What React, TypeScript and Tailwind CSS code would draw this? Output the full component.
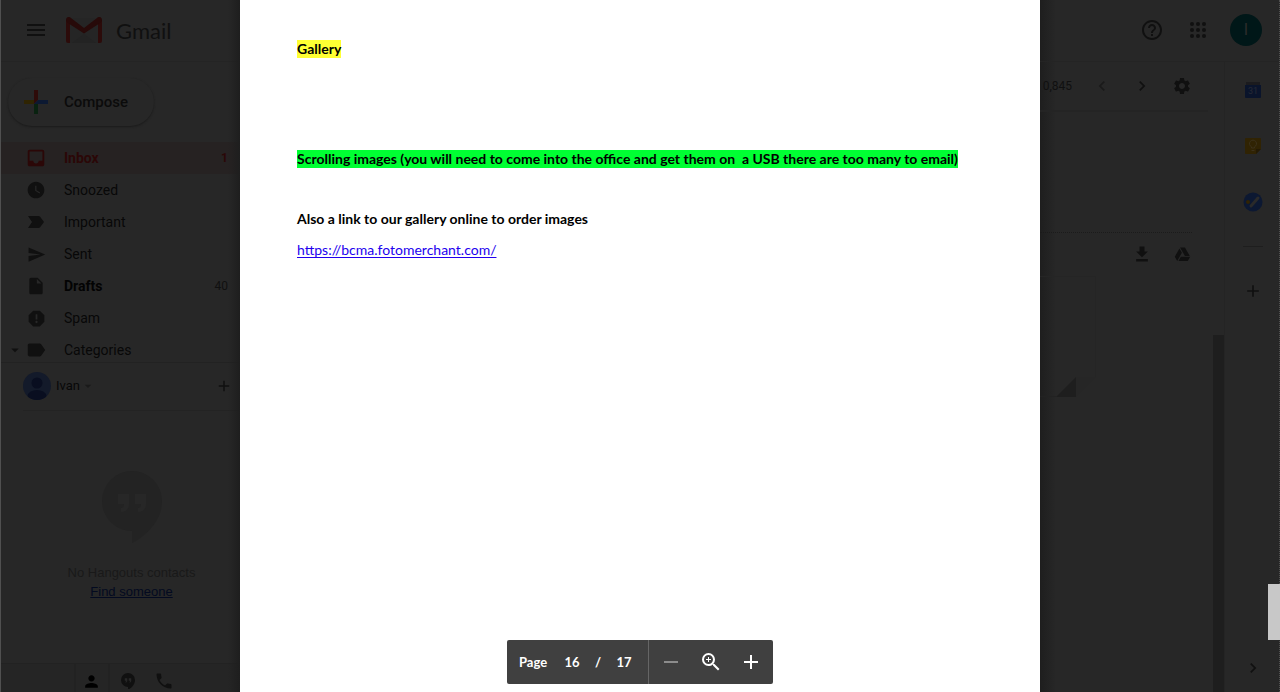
import type { ReactNode } from 'react';
import {
  MdAdd,
  MdArrowDropDown,
  MdChevronLeft,
  MdChevronRight,
  MdHelpOutline,
  MdInbox,
  MdInsertDriveFile,
  MdLabel,
  MdPerson,
  MdPhone,
  MdReport,
  MdSend,
  MdSettings,
  MdWatchLater,
  MdZoomIn,
} from 'react-icons/md';

type Folder = { name: string; icon: ReactNode; count?: string; tone: string };

function ImportantMark() {
  return (
    <svg width="16" height="12" viewBox="0 0 16 12" fill="currentColor" aria-hidden="true">
      <path d="M0 0h10.500c.7 0 1.200.3 1.600.8L16 6l-3.900 5.200c-.4.5-.9.8-1.600.8H0l4-6z" />
    </svg>
  );
}

const folders: Folder[] = [
  { name: 'Inbox', icon: <MdInbox size={22} />, count: '1', tone: 'bg-[#262222] font-bold text-[#2b0707]' },
  { name: 'Snoozed', icon: <MdWatchLater size={20} />, tone: 'text-[#080808]' },
  { name: 'Important', icon: <ImportantMark />, tone: 'text-[#080808]' },
  { name: 'Sent', icon: <MdSend size={19} />, tone: 'text-[#080808]' },
  { name: 'Drafts', icon: <MdInsertDriveFile size={20} />, count: '40', tone: 'font-bold text-[#030303]' },
  { name: 'Spam', icon: <MdReport size={21} />, tone: 'text-[#080808]' },
  { name: 'Categories', icon: <MdLabel size={22} />, tone: 'text-[#080808]' },
];

function GmailLogo() {
  return (
    <svg width="36" height="26" viewBox="0 0 36 26" aria-hidden="true">
      <path d="M2 1h32v25H2z" fill="#252525" />
      <path d="M18 17 30 26H6z" fill="#232323" />
      <path d="M0 3v21a2 2 0 0 0 2 2h2V3z" fill="#2c0b0a" />
      <path d="M36 3v21a2 2 0 0 1-2 2h-2V3z" fill="#2c0b0a" />
      <path d="M0 3C0 0 3-1 5 1l13 10L31 1c2-2 5-1 5 2 0 1-.6 2-1.500 2.700L18 16.500 1.500 5.700C.6 5 0 4 0 3z" fill="#270a09" />
    </svg>
  );
}

function ComposePlus() {
  return (
    <svg width="24" height="24" viewBox="0 0 24 24" aria-hidden="true">
      <path d="M10 0h4v10l-4 4z" fill="#2e0b09" />
      <path d="M0 10h10v4H0z" fill="#2f2402" />
      <path d="M14 10h10v4H10z" fill="#0c1932" />
      <path d="M10 14h4v10h-4z" fill="#092210" />
    </svg>
  );
}

function HangoutsMark({ size, fill, quote }: { size: number; fill: string; quote: string }) {
  return (
    <svg width={size} height={size * 1.2} viewBox="0 0 60 72" aria-hidden="true">
      <path d="M30 0a30 30 0 1 0 0 60v12c14-7 30-22 30-42A30 30 0 0 0 30 0z" fill={fill} />
      <path d="M16 23h11v10c0 5-3 8-8 8v-4c2 0 3-1 3-4h-6zM33 23h11v10c0 5-3 8-8 8v-4c2 0 3-1 3-4h-6z" fill={quote} />
    </svg>
  );
}

function FolderRow({ folder }: { folder: Folder }) {
  return (
    <a href="#" className={`flex h-8 shrink-0 items-center pr-3 text-sm ${folder.tone}`}>
      <span className="flex w-[23px] justify-end text-[#101010]">
        {folder.name === 'Categories' && <MdArrowDropDown size={18} />}
      </span>
      <span className={`flex w-6 justify-center ${folder.name === 'Inbox' ? '' : 'text-[#101010]'}`}>{folder.icon}</span>
      <span className="ml-4 flex-1">{folder.name}</span>
      {folder.count && (
        <span className={folder.name === 'Inbox' ? 'text-xs' : 'text-xs font-normal text-[#101010]'}>{folder.count}</span>
      )}
    </a>
  );
}

function Sidebar() {
  return (
    <aside className="relative flex w-60 shrink-0 flex-col overflow-hidden border-l border-[#505050] bg-[#272727]">
      <header className="flex h-[62px] shrink-0 items-center border-b border-[#242424] pb-px pl-[26px]">
        <button aria-label="Main menu" className="flex w-[18px] flex-col gap-[3px]">
          <span className="h-[2px] w-full bg-[#101010]" />
          <span className="h-[2px] w-full bg-[#101010]" />
          <span className="h-[2px] w-full bg-[#101010]" />
        </button>
        <span className="ml-[21px] flex items-center gap-[14px]">
          <GmailLogo />
          <span className="font-[Lato,sans-serif] text-[22px] text-[#101010]">Gmail</span>
        </span>
      </header>
      <div className="shrink-0 pt-4 pl-[7px]">
        <button className="flex h-12 w-[146px] items-center gap-4 rounded-full bg-[#272727] pl-4 text-[#0b0b0b] shadow-[0_1px_2px_#1b1b1b]">
          <ComposePlus />
          <span className="text-[15px] font-medium">Compose</span>
        </button>
      </div>
      <nav className="mt-4 flex h-[221px] shrink-0 flex-col overflow-hidden border-b border-[#222222]">
        {folders.map((f) => (
          <FolderRow key={f.name} folder={f} />
        ))}
      </nav>
      <section className="flex min-h-0 flex-1 flex-col">
        <div className="ml-[22px] flex h-12 shrink-0 items-center border-b border-[#232323] pr-[7px] pb-[2px] text-[#101010]">
          <svg width="28" height="28" viewBox="0 0 28 28" aria-hidden="true">
            <clipPath id="face"><circle cx="14" cy="14" r="14" /></clipPath>
            <g clipPath="url(#face)">
              <path d="M0 0h28v28H0z" fill="#131a2a" />
              <circle cx="14" cy="11" r="5.500" fill="#090e20" />
              <ellipse cx="14" cy="24" rx="9.500" ry="6" fill="#090e20" />
            </g>
          </svg>
          <button className="ml-[5px] flex items-center text-[13px] text-[#080808]">
            Ivan
            <MdArrowDropDown size={16} className="text-[#1a1a1a]" />
          </button>
          <button aria-label="New conversation" className="ml-auto">
            <MdAdd size={18} />
          </button>
        </div>
        <div className="flex flex-1 flex-col items-center pt-[60px] pl-[22px] font-['Liberation_Sans',sans-serif] text-[13px] leading-[19px]">
          <HangoutsMark size={60} fill="#232323" quote="#272727" />
          <p className="mt-5 text-[#191919]">No Hangouts contacts</p>
          <a href="#" className="text-[#030a20] underline">Find someone</a>
        </div>
        <div className="flex h-[29px] shrink-0 justify-center border-t border-[#222222] bg-[#252525] pl-[14px] text-[#101010]">
          <button aria-label="Contacts" className="flex w-9 items-center justify-center border-x-2 border-[#222222] pt-[6px] text-black">
            <MdPerson size={19} />
          </button>
          <button aria-label="Conversations" className="flex w-9 items-center justify-center pt-[6px]">
            <HangoutsMark size={14} fill="#101010" quote="#272727" />
          </button>
          <button aria-label="Phone" className="flex w-9 items-center justify-center pt-[6px]">
            <MdPhone size={20} />
          </button>
        </div>
      </section>
      <div className="absolute inset-y-0 right-0 w-3 bg-linear-to-l from-[#1e1e1e] to-transparent" />
    </aside>
  );
}

function PageControls() {
  return (
    <div className="absolute bottom-2 left-1/2 flex h-11 w-[266px] -translate-x-1/2 items-center rounded-xs bg-[#404040] font-[Lato,sans-serif] text-[13px] font-bold text-white">
      <label htmlFor="page" className="ml-3 w-[37px]">Page</label>
      <input id="page" defaultValue="16" className="w-8 bg-transparent text-center" />
      <span className="w-5 text-center">/</span>
      <span className="w-8 text-center">17</span>
      <div className="ml-2 flex h-full flex-1 items-center justify-center border-l border-[#666666]">
        <button aria-label="Zoom out" className="flex h-10 w-10 items-center justify-center">
          <span className="h-[2px] w-[14px] bg-[#8c8c8c]" />
        </button>
        <button aria-label="Reset zoom" className="flex h-10 w-10 items-center justify-center">
          <MdZoomIn size={24} />
        </button>
        <button aria-label="Zoom in" className="flex h-10 w-10 items-center justify-center">
          <MdAdd size={24} />
        </button>
      </div>
    </div>
  );
}

function DocumentPage() {
  return (
    <main className="relative min-w-0 flex-1 bg-white px-[57px] font-[Lato,sans-serif] text-sm leading-[18px] text-black">
      <h1 className="pt-10 font-bold">
        <mark className="inline-block bg-[#ffff33] text-black">Gallery</mark>
      </h1>
      <p className="mt-[92px] font-bold whitespace-pre">
        <mark className="inline-block bg-[#00ff33] text-black">
          {'Scrolling images (you will need to come into the office and get them on  a USB there are too many to email)'}
        </mark>
      </p>
      <p className="mt-[42px] font-bold">Also a link to our gallery online to order images</p>
      <p className="mt-[13px]">
        <a href="https://bcma.fotomerchant.com/" className="text-[#2200ee] underline underline-offset-2">
          https://bcma.fotomerchant.com/
        </a>
      </p>
      <PageControls />
    </main>
  );
}

function AppsGrid() {
  return (
    <svg width="18" height="18" viewBox="0 0 18 18" fill="#101010" aria-hidden="true">
      {[3, 9, 15].map((y) => [3, 9, 15].map((x) => <circle key={`${x}-${y}`} cx={x} cy={y} r="2" />))}
    </svg>
  );
}

function MailPane() {
  return (
    <section className="flex min-w-0 flex-1 flex-col">
      <div className="mr-4 flex h-[50px] shrink-0 items-center justify-end border-b-2 border-[#242424] pr-[6px] text-xs text-[#101010]">
        <span className="mr-[10px]">0,845</span>
        <button aria-label="Newer" className="flex w-10 shrink-0 justify-center text-[#1a1a1a]"><MdChevronLeft size={20} /></button>
        <button aria-label="Older" className="flex w-10 shrink-0 justify-center"><MdChevronRight size={20} /></button>
        <button aria-label="Settings" className="flex w-10 shrink-0 justify-center"><MdSettings size={20} /></button>
      </div>
      <div className="flex min-h-0 flex-1 justify-between">
        <div className="w-[152px] pt-[120px]">
          <div className="flex h-11 items-center justify-end gap-5 border-t border-dotted border-[#1b1b1b] pb-px text-[#101010]">
            <button aria-label="Download" className="flex w-5 justify-center">
              <svg width="20" height="20" viewBox="0 0 24 24" fill="currentColor"><path d="M19 9h-4V3H9v6H5l7 7 7-7zM5 18v3h14v-3H5z" /></svg>
            </button>
            <button aria-label="Add to Drive" className="flex w-5 justify-center">
              <svg width="17" height="17" viewBox="0 0 24 24" fill="currentColor">
                <path d="M7.710 3.500 1.150 15 4.580 21 11.130 9.500zM9.730 15 6.300 21h13.120l3.430-6zM22.280 14 15.420 2H8.580l6.850 12z" />
              </svg>
            </button>
          </div>
          <div className="h-[101px] w-14 border-t border-r border-[#252525]" />
          <svg width="56" height="20" viewBox="0 0 56 20" aria-hidden="true">
            <path d="M16 20 36 0v20z" fill="#1e1e1e" />
            <path d="M36 20 56 0H36z" fill="#262626" />
            <path d="M0 19.500h16" stroke="#222222" />
          </svg>
        </div>
        <div className="mt-[223px] w-[11px] bg-[#1e1e1e]" />
      </div>
    </section>
  );
}

function AddOnRail() {
  return (
    <aside className="flex w-[55px] shrink-0 flex-col items-center border-l border-[#242424] pl-px">
      <button aria-label="Calendar" className="mt-5">
        <svg width="16" height="16" viewBox="0 0 16 16" aria-hidden="true">
          <path d="M1 0h14v5H1z" fill="#1b1b1e" />
          <path d="M0 3h16v12a1 1 0 0 1-1 1H1a1 1 0 0 1-1-1z" fill="#0a142b" />
          <text x="8" y="12" fontSize="9" fontFamily="Roboto, sans-serif" textAnchor="middle" fill="#262a35">31</text>
        </svg>
      </button>
      <button aria-label="Keep" className="mt-10">
        <svg width="16" height="16" viewBox="0 0 16 16" fill="none" aria-hidden="true">
          <path d="M1 0h14a1 1 0 0 1 1 1v10l-5 5H1a1 1 0 0 1-1-1V1a1 1 0 0 1 1-1z" fill="#302303" />
          <path d="M16 11v0l-5 5v-5z" fill="#241a04" />
          <path d="M6.500 10V8.800a3.500 3.500 0 1 1 3 0V10zM6.500 12.500h3" stroke="#3b311b" />
        </svg>
      </button>
      <button aria-label="Tasks" className="mt-[38px]">
        <svg width="20" height="20" viewBox="0 0 20 20" aria-hidden="true">
          <circle cx="10" cy="10" r="9.500" fill="#0c1832" />
          <circle cx="5" cy="10" r="2" fill="#302303" />
          <path d="m8 14 7-8" stroke="#2a2a2a" strokeWidth="3" strokeLinecap="round" />
        </svg>
      </button>
      <span className="mt-[34px] h-px w-5 bg-[#1e1e1e]" />
      <button aria-label="Get add-ons" className="mt-[34px] text-[#101010]"><MdAdd size={20} /></button>
      <button aria-label="Hide side panel" className="mt-auto mb-[14px] text-[#101010]"><MdChevronRight size={20} /></button>
    </aside>
  );
}

function RightColumn() {
  return (
    <div className="relative flex w-60 shrink-0 flex-col border-r border-dotted border-[#505050] bg-[#272727]">
      <div className="absolute inset-y-0 left-0 w-4 bg-linear-to-r from-[#1e1e1e] to-transparent" />
      <header className="relative flex h-[62px] shrink-0 items-center justify-end border-b border-[#242424] pr-[17px] pb-px text-[#101010]">
        <button aria-label="Help"><MdHelpOutline size={24} /></button>
        <button aria-label="Google apps" className="ml-[25px]"><AppsGrid /></button>
        <button aria-label="Account" className="ml-[23px] h-8 w-8 rounded-full bg-[#001718] text-base text-[#2c2c2c]">I</button>
      </header>
      <div className="relative flex min-h-0 flex-1">
        <MailPane />
        <AddOnRail />
      </div>
      <div className="absolute -right-px bottom-[52px] h-14 w-3 bg-[#c8c8c8]" />
    </div>
  );
}

export default function App() {
  return (
    <div className="flex h-screen overflow-hidden bg-[#272727] font-[Roboto,sans-serif]">
      <Sidebar />
      <DocumentPage />
      <RightColumn />
    </div>
  );
}
